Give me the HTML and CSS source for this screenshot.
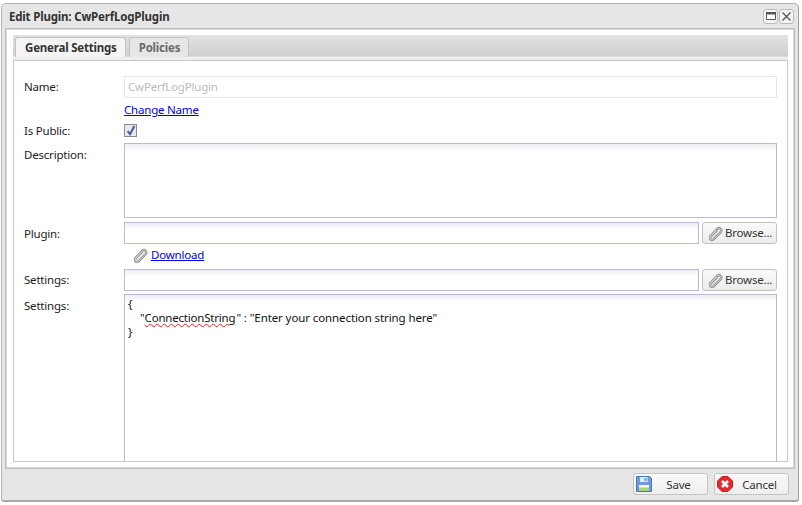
FILE: index.html
```html
<!DOCTYPE html>
<html lang="en">
<head>
<meta charset="utf-8">
<title>Edit Plugin</title>
<link rel="stylesheet" href="styles.css">
</head>
<body>
<svg width="0" height="0" class="defs">
  <symbol id="clip" viewBox="0 0 16 16">
    <path d="M3 11.500 10.300 3.900a2.300 2.300 0 0 1 3.300 3.200L6.400 14.300a1.900 1.900 0 0 1-2.800-2.700L9.800 5.300" fill="none" stroke="#8c8c8c" stroke-width="2.400" stroke-linecap="round"/>
    <path d="M3 11.500 10.300 3.900a2.300 2.300 0 0 1 3.300 3.200L6.400 14.300a1.900 1.900 0 0 1-2.800-2.700L9.800 5.300" fill="none" stroke="#e4e4e4" stroke-width=".8" stroke-linecap="round"/>
  </symbol>
</svg>
<div class="window">
  <header class="titlebar">
    <span class="title">Edit Plugin: CwPerfLogPlugin</span>
    <div class="winbtns">
      <button class="winbtn" aria-label="Maximize"><svg width="10" height="8" viewBox="0 0 10 8"><path d="M.5.500h9v7h-9z" fill="#fff" stroke="#555"/><path d="M0 0h10v2.500H0z" fill="#555"/></svg></button>
      <button class="winbtn" aria-label="Close"><svg width="9" height="9" viewBox="0 0 9 9"><path d="M.5.500l8 8M8.500.500l-8 8" stroke="#555" stroke-width="1.300"/></svg></button>
    </div>
  </header>
  <div class="body">
    <div class="tabstrip">
      <div class="tab active">General Settings</div>
      <div class="tab">Policies</div>
    </div>
    <div class="panel">
      <form class="form">
        <label class="lbl lbl-name">Name:</label>
        <div class="input disabled">CwPerfLogPlugin</div>
        <span></span>
        <a class="link link-change" href="#">Change Name</a>
        <label class="lbl lbl-public">Is Public:</label>
        <div class="check"><svg width="10" height="11" viewBox="0 0 10 11"><path d="M1.600 6 4 9.200 8.400 1" fill="none" stroke="#4a5a9a" stroke-width="2"/></svg></div>
        <label class="lbl lbl-desc">Description:</label>
        <div class="area area-desc"></div>
        <label class="lbl lbl-plugin">Plugin:</label>
        <div class="filerow">
          <div class="input"></div>
          <button class="browse" type="button"><svg width="16" height="16"><use href="#clip"/></svg><span class="browse-text">Browse...</span></button>
        </div>
        <span></span>
        <div class="download"><svg width="16" height="16"><use href="#clip"/></svg><a class="link" href="#">Download</a></div>
        <label class="lbl lbl-settings">Settings:</label>
        <div class="filerow">
          <div class="input"></div>
          <button class="browse" type="button"><svg width="16" height="16"><use href="#clip"/></svg><span class="browse-text">Browse...</span></button>
        </div>
        <label class="lbl lbl-code">Settings:</label>
        <div class="area area-code">
          <div>{</div>
          <div class="indent">"<span class="spell">ConnectionString</span>" : "Enter your connection string here"</div>
          <div>}</div>
        </div>
      </form>
    </div>
  </div>
  <footer class="footer">
    <button class="action" type="button">
      <svg width="16" height="16" viewBox="0 0 16 16"><path d="M.5.500h13l2 2v13H.5z" fill="#6f9bd6" stroke="#4a76b4"/><path d="M4 1h7.500v5H4z" fill="#dfe8f4"/><path d="M8.500 2h2v3h-2z" fill="#6f9bd6"/><path d="M3 9h10v6H3z" fill="#a8d48a"/><path d="M3 9h10v2.500H3z" fill="#f2f6ec"/></svg>
      <span class="action-text">Save</span>
    </button>
    <button class="action" type="button">
      <svg width="16" height="16" viewBox="0 0 16 16"><path d="M5 .5h6L15.500 5v6L11 15.500H5L.5 11V5z" fill="#e4282c" stroke="#c81e1e"/><path d="M5 5l6 6M11 5l-6 6" stroke="#fff" stroke-width="2.600"/></svg>
      <span class="action-text">Cancel</span>
    </button>
  </footer>
</div>
</body>
</html>
```
FILE: styles.css
```css
* { box-sizing: border-box; }
html, body { margin: 0; height: 100%; }
body {
  background: #fff;
  padding: 3px 3px 3px 1px;
  font: 11.5px/15px "Noto Sans", "Open Sans", sans-serif;
  letter-spacing: -.2px;
  color: #1c1c1c;
  overflow: hidden;
}
.defs { position: absolute; }
.window {
  height: 499px;
  background: #e6e6e6;
  border: 1px solid #b4b4b4;
  border-right-color: #a0a0a0;
  border-bottom: 2px solid #a8a8a8;
  border-radius: 5px 5px 3px 3px;
  padding: 0 3px;
  display: flex;
  flex-direction: column;
}
.titlebar {
  height: 24px;
  display: flex;
  align-items: center;
  justify-content: space-between;
  padding: 0 0 0 4px;
  flex: none;
}
.title { font-weight: 700; color: #333; letter-spacing: -.18px; }
.winbtns { display: flex; gap: 1px; margin-right: 1px; }
.winbtn {
  width: 15px; height: 15px; padding: 0;
  display: flex; align-items: center; justify-content: center;
  background: #f4f4f4;
  border: 1px solid #bbb;
  border-radius: 3px;
}
.body {
  height: 441px;
  flex: none;
  background: #fff;
  border: 1px solid #c4b8bb;
  outline: 1px solid #d8d8d8;
  outline-offset: -2px;
  padding: 6px 6px 6px 7px;
  display: flex;
  flex-direction: column;
}
.tabstrip {
  height: 25px;
  flex: none;
  background: linear-gradient(#e2e2e2, #cfcfcf 21px, #eeeeee 22px);
  display: flex;
  align-items: flex-start;
  gap: 3px;
  padding: 2px 0 0 2px;
}
.tab {
  height: 20px;
  padding: 2px 8px 0 9px;
  background: #e6e6e6;
  border: 1px solid #c4c4c4;
  border-bottom: 0;
  border-radius: 3px 3px 0 0;
  font-weight: 700;
  letter-spacing: -.2px;
  color: #6a6a6a;
}
.tab.active { background: #f4f4f4; color: #333; }
.panel {
  flex: 1;
  min-height: 0;
  overflow: hidden;
  border: 1px solid #c8c8c8;
  background: #fff;
  padding: 15px 10px 0;
}
.form {
  display: grid;
  grid-template-columns: 100px 653px;
  align-items: start;
}
.lbl { padding-top: 4px; }
.lbl-name { padding-top: 3px; }
.input {
  height: 22px;
  flex: 1;
  min-width: 0;
  border: 1px solid #b8bacf;
  background: linear-gradient(#eceef2, #fff 7px);
  padding: 2px 3px;
}
.input.disabled { border-color: #e6e6ee; background: #fff; color: #bbb; }
.link { color: #0000ee; text-decoration: underline; }
.link-change { display: block; margin-top: 4px; height: 15px; }
.lbl-public { margin-top: 3px; padding-top: 3px; }
.check {
  width: 13px; height: 13px;
  margin-top: 7px;
  border: 1px solid #8a8a8a;
  background: #e6e8f0;
  display: flex; align-items: center; justify-content: center;
}
.lbl-desc { margin-top: 5px; padding-top: 4px; }
.area { border: 1px solid #b8bacf; background: linear-gradient(#eceef2, #fff 7px); }
.area-desc { height: 75px; margin-top: 5px; }
.lbl-plugin, .lbl-plugin + .filerow { margin-top: 4px; }
.filerow { display: flex; gap: 3px; }
.browse {
  width: 75px; height: 22px; padding: 0 0 0 4px;
  flex: none;
  display: flex; align-items: center; gap: 2px;
  font: inherit; letter-spacing: inherit; color: #333;
  background: linear-gradient(#fafafa, #ececec);
  border: 1px solid #c0c0c0;
  border-radius: 3px;
}
.browse-text { margin-bottom: 2px; }
.download { display: flex; align-items: center; gap: 3px; margin-left: 8px; height: 22px; padding-bottom: 1px; }
.lbl-settings { margin-top: 3px; padding-top: 3px; }
.lbl-settings + .filerow { margin-top: 3px; }
.lbl-code { margin-top: 3px; }
.area-code { height: 260px; margin-top: 3px; padding: 2px 3px; line-height: 14px; letter-spacing: -.1px; color: #111; }
.indent { padding-left: 12px; }
.spell { letter-spacing: -.2px; margin-right: 1px; text-decoration: underline wavy #d22; text-decoration-thickness: 1px; }
.footer {
  flex: 1;
  display: flex;
  justify-content: flex-end;
  align-items: flex-start;
  gap: 6px;
  padding: 4px 6px 0 0;
}
.action {
  width: 75px; height: 22px; padding: 0 2px;
  display: flex; align-items: center;
  font: inherit; letter-spacing: inherit; color: #333;
  background: linear-gradient(#fafafa, #efefef);
  border: 1px solid #c4c4c4;
  border-radius: 3px;
}
.action-text { flex: 1; text-align: center; }
```
